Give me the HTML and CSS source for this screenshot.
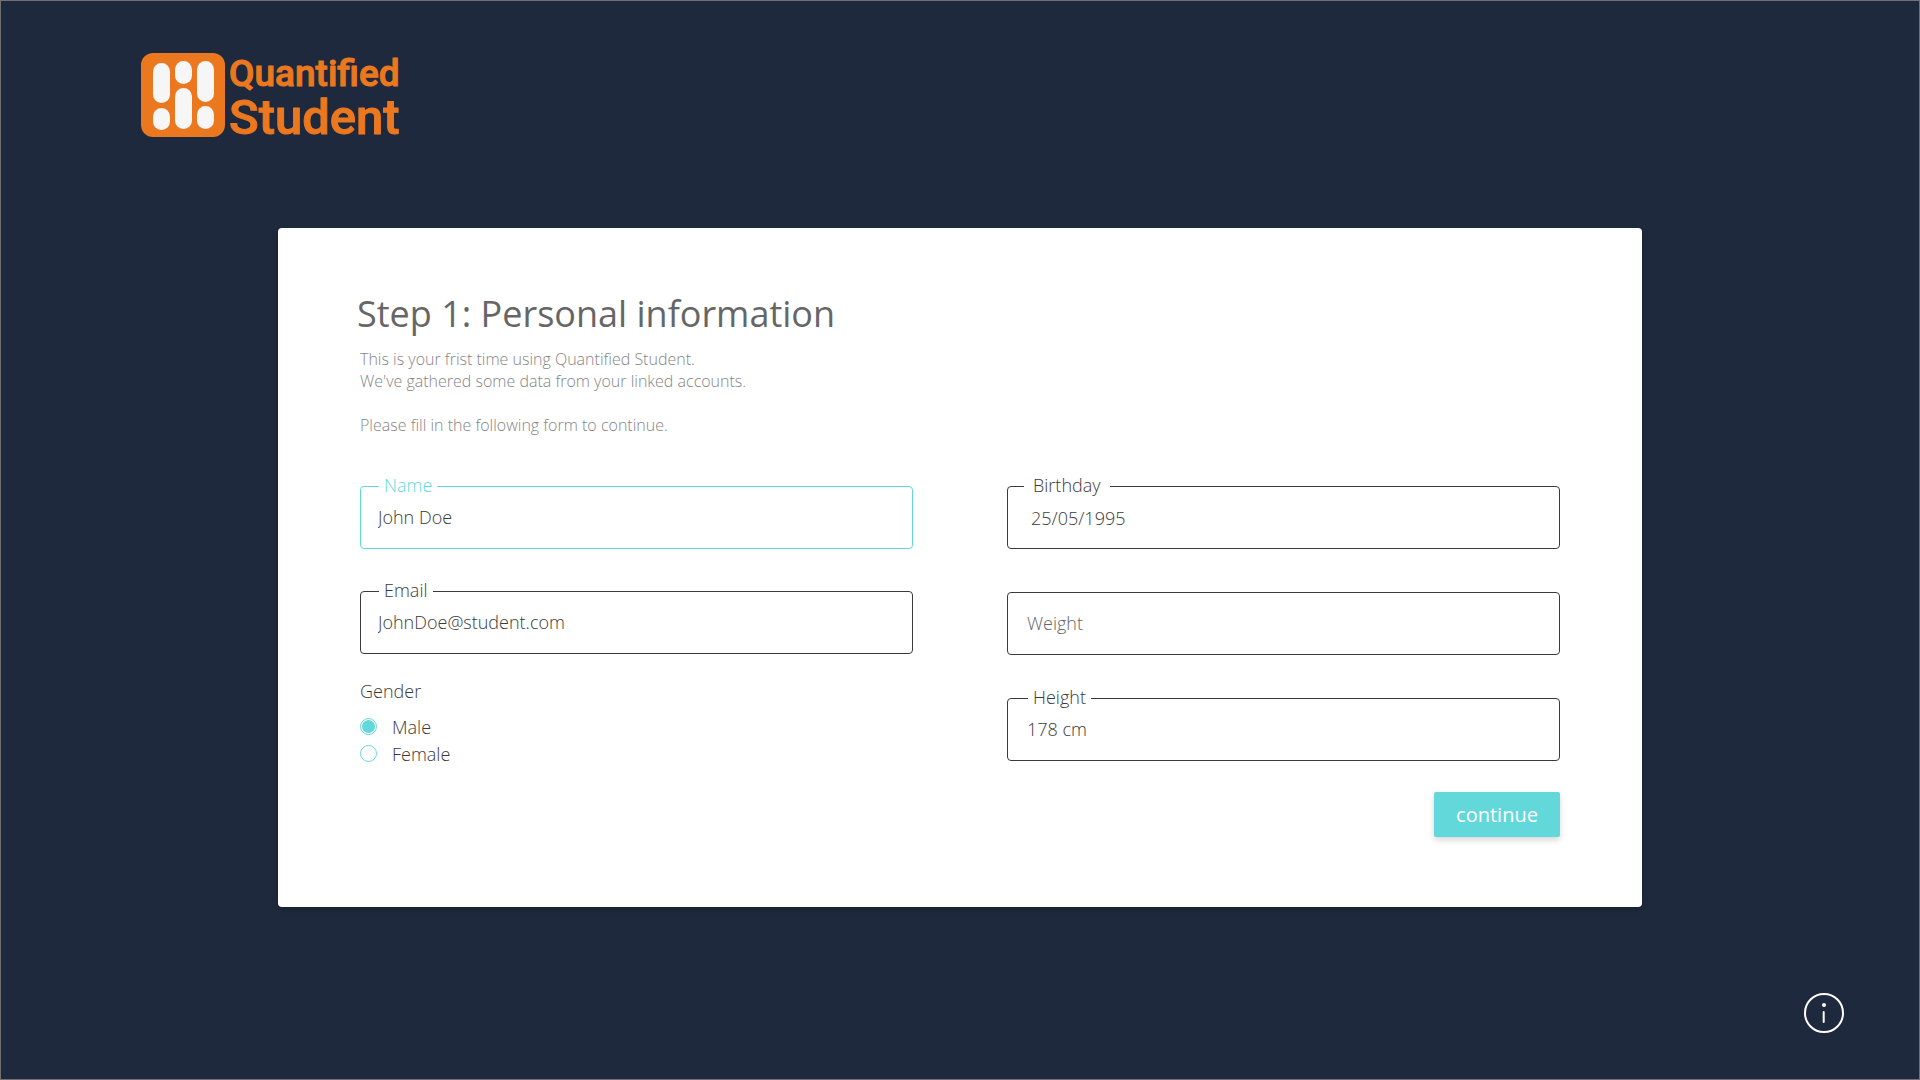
FILE: index.html
```
<!doctype html>
<html lang="en">

<head>
  <meta charset="utf-8">
  <title>Quantified Student</title>
  <meta name="viewport" content="width=device-width,initial-scale=1.0">
  <link rel="stylesheet" href="styles.css">
</head>

<body>

  <header class="site-header">
    <svg class="logo" viewBox="0 0 260 84" role="img" aria-label="Quantified Student">
      <rect class="logo-tile" width="84" height="84" rx="12"/>
      <g class="logo-pills">
        <rect x="12" y="10" width="17" height="40" rx="8.5"/>
        <rect x="12" y="55" width="17" height="22" rx="8.5"/>
        <rect x="34" y="8" width="17" height="23" rx="8.5"/>
        <rect x="34" y="35" width="17" height="41" rx="8.5"/>
        <rect x="56" y="8" width="17" height="41" rx="8.5"/>
        <rect x="56" y="53" width="17" height="23" rx="8.5"/>
      </g>
      <text class="logo-top" x="88" y="33">Quantified</text>
      <text class="logo-bottom" x="88" y="81">Student</text>
    </svg>
  </header>

  <main class="card">
    <h1>Step 1: Personal information</h1>
    <p class="intro">This is your frist time using Quantified Student.<br>
      We've gathered some data from your linked accounts.<br>
      <br>
      Please fill in the following form to continue.</p>

    <form class="form">
      <div class="column">
        <div class="field active">
          <label for="name">Name</label>
          <input id="name" type="text" value="John Doe">
        </div>
        <div class="field">
          <label for="email">Email</label>
          <input id="email" type="email" value="JohnDoe@student.com">
        </div>
        <fieldset class="gender">
          <legend>Gender</legend>
          <div class="option">
            <input id="male" type="radio" name="gender" checked>
            <label for="male">Male</label>
          </div>
          <div class="option">
            <input id="female" type="radio" name="gender">
            <label for="female">Female</label>
          </div>
        </fieldset>
      </div>

      <div class="column right">
        <div class="field date">
          <label for="birthday">Birthday</label>
          <input id="birthday" type="text" value="25/05/1995">
        </div>
        <div class="field">
          <input id="weight" type="text" placeholder="Weight" aria-label="Weight">
        </div>
        <div class="field">
          <label for="height">Height</label>
          <input id="height" type="text" value="178 cm">
        </div>
      </div>

      <button class="continue" type="submit">continue</button>
    </form>
  </main>

  <footer class="site-footer">
    <button class="info" type="button" aria-label="Information">
      <svg viewBox="0 0 40 40">
        <circle class="ring" cx="20" cy="20" r="19"/>
        <circle class="dot" cx="20" cy="12" r="2"/>
        <path class="stem" d="M19.7 19v10"/>
      </svg>
    </button>
  </footer>

</body>

</html>
```
FILE: styles.css
```
:root {
  --navy: #1f293d;
  --orange: #eb781f;
  --teal: #63d8da;
  --dark: #3a3a3a;
  --grey: #666;
  --greyLight: #858585;
}

* {
  box-sizing: border-box;
}

body {
  display: flex;
  flex-direction: column;
  min-height: 100vh;
  margin: 0;
  border: 1px solid #707070;
  font-family: "Open Sans", Helvetica, Arial, sans-serif;
  font-size: 18px;
  font-weight: 300;
  line-height: 24px;
  color: var(--dark);
  background-color: var(--navy);
}

.site-header {
  padding: 52px 140px 0;
}

.logo {
  display: block;
  width: 260px;
  height: 84px;
  overflow: visible;
  font-family: Roboto, sans-serif;
  font-weight: 500;
}

.logo-tile,
.logo text {
  fill: var(--orange);
}

.logo text {
  stroke: var(--orange);
  stroke-width: 1;
  stroke-linejoin: round;
}

.logo-pills {
  fill: #f6f6f6;
}

.logo-top {
  font-size: 37px;
}

.logo-bottom {
  font-size: 49px;
}

.card {
  width: calc(100% - 80px);
  max-width: 1364px;
  margin: 91px auto 40px;
  padding: 60px 82px 70px;
  border-radius: 4px;
  background-color: white;
  box-shadow: 0 3px 6px rgba(0, 0, 0, .16);
}

h1 {
  margin: 0 0 0 -3px;
  font-size: 36px;
  font-weight: 400;
  line-height: 52px;
  color: var(--grey);
}

.intro {
  margin: 8px 0 50px;
  font-size: 16px;
  line-height: 22px;
  color: var(--greyLight);
}

.form {
  display: grid;
  grid-template-columns: 1fr 1fr;
  column-gap: 94px;
  row-gap: 25px;
}

.column {
  display: flex;
  flex-direction: column;
  gap: 42px;
}

.column.right {
  gap: 43px;
}

.field {
  position: relative;
}

.field input {
  display: block;
  width: 100%;
  height: 63px;
  padding: 0 17px 2px;
  border: 1px solid var(--dark);
  border-radius: 4px;
  outline: none;
  font: inherit;
  color: inherit;
  background-color: white;
}

.field input::placeholder {
  color: var(--grey);
  opacity: 1;
}

/* label sits in a notch on the top border */
.field label {
  position: absolute;
  top: -13px;
  left: 19px;
  padding: 0 5px;
  background-color: white;
}

.right .field label {
  left: 21px;
}

.right .date label {
  left: 17px;
  padding: 0 9px;
}

.right input {
  padding: 0 19px 2px;
}

.right .date input {
  padding: 0 23px;
}

.active input {
  border-color: var(--teal);
}

.active label {
  color: var(--teal);
}

.gender {
  margin: -17px 0 0;
  padding: 0;
  border: none;
}

.gender legend {
  margin-bottom: 10px;
  padding: 0;
}

.option {
  display: flex;
  align-items: center;
  gap: 15px;
  height: 27px;
}

.option input {
  appearance: none;
  width: 17px;
  height: 17px;
  margin: 0;
  padding: 1px;
  border: 1px solid var(--teal);
  border-radius: 50%;
}

.option input:checked {
  background-color: var(--teal);
  background-clip: content-box;
}

.continue {
  grid-column: 2;
  justify-self: end;
  width: 126px;
  height: 45px;
  border: none;
  border-radius: 2px;
  font: inherit;
  font-size: 20px;
  font-weight: 400;
  color: white;
  background-color: var(--teal);
  box-shadow: 0 3px 6px rgba(0, 0, 0, .16);
}

.site-footer {
  display: flex;
  justify-content: flex-end;
  margin-top: auto;
  padding: 0 75px 46px;
}

.info {
  width: 40px;
  height: 40px;
  padding: 0;
  border: none;
  background: none;
}

.info svg {
  display: block;
}

.ring,
.stem {
  fill: none;
  stroke: white;
  stroke-width: 2;
  stroke-linecap: round;
}

.dot {
  fill: white;
}
```
